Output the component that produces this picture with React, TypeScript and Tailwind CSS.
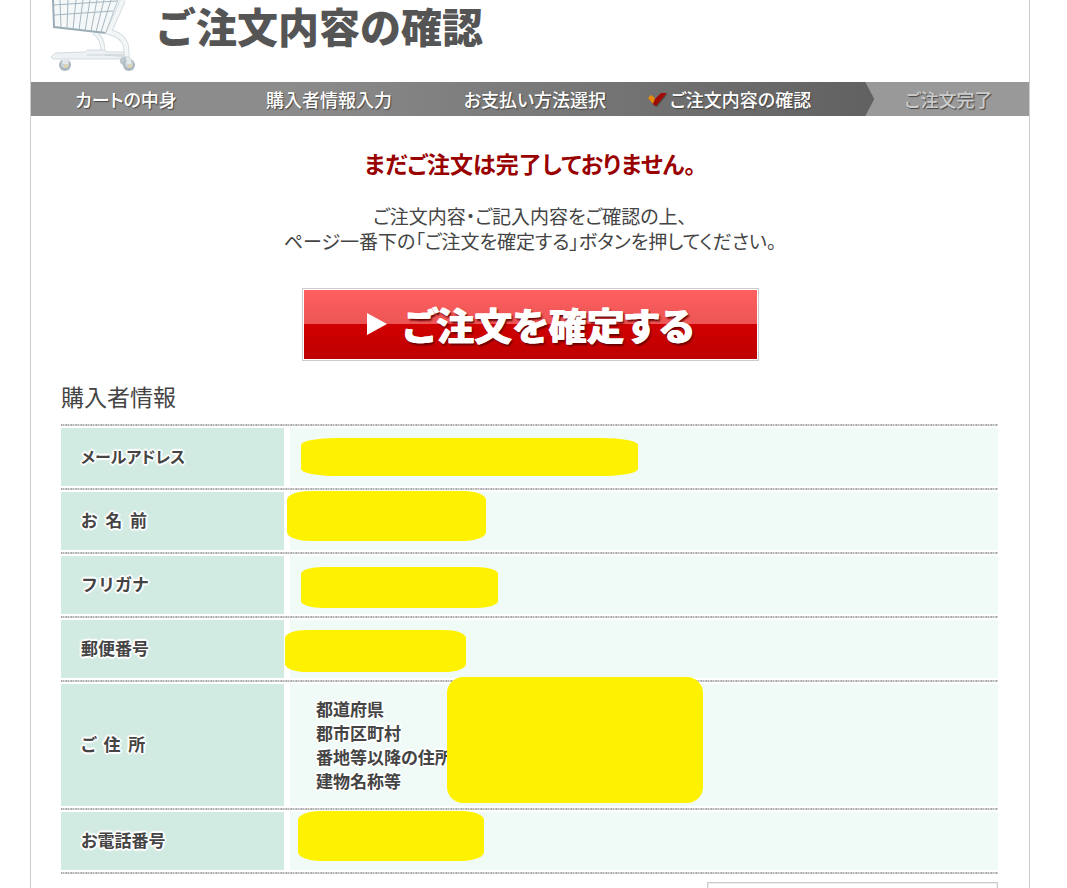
import type { ReactNode } from 'react';

const halo =
  '[text-shadow:1px_1px_1px_#fff,-1px_-1px_1px_#fff,1px_-1px_1px_#fff,-1px_1px_1px_#fff,2px_0_1px_#fff,-2px_0_1px_#fff,0_2px_1px_#fff,0_-2px_1px_#fff,0_0_3px_#fff]';

const dots =
  'bg-[repeating-linear-gradient(90deg,#a8a8a8_0_1px,#d4d4d4_1px_2px,#b8b8b8_2px_3px,#dcdcdc_3px_4px,#c4c4c4_4px_5px)] bg-[length:100%_2px] bg-no-repeat';

function Cart() {
  return (
    <svg viewBox="0 0 88 76" className="h-[76px] w-[88px] shrink-0" fill="none" aria-hidden="true">
      <path d="M43 32 Q52 38 52 51" stroke="#d3dbdf" strokeWidth="5" />
      <path d="M43 32 Q52 38 52 51" stroke="#f3f6f7" strokeWidth="3" />
      <path d="M2 0 L3 27 L54 33 L68 0 Z" fill="#f5f8f9" />
      <g stroke="#a7b6bf" strokeWidth="1">
        <path d="M2 5 L66 1 M3 15 L62 11" />
        <path d="M9 0 L10 28 M17 0 L16 28 M25 0 L22 29 M32 0 L28 30 M39 0 L34 31 M46 0 L40 31 M53 0 L45 32 M60 0 L50 32" />
      </g>
      <path d="M2 0 L3 27 L55 33" stroke="#9badb7" strokeWidth="2" />
      <path d="M72 0 L58 32 Q72 35 75 46 L76 60" stroke="#d6dee2" strokeWidth="6" />
      <path d="M72 0 L58 32 Q72 35 75 46 L76 60" stroke="#f3f6f7" strokeWidth="4" />
      <path d="M67 0 L55 32" stroke="#b4c1c8" strokeWidth="1" />
      <path d="M4 53 L34 52 L36 50 H53 L56 52 H73 V55 H54 L78 57 V59 H2 L0 57 Z" fill="#edf1f3" stroke="#d3dbdf" strokeWidth="1" />
      <path d="M36 55 H73" stroke="#cdd6da" strokeWidth="1" />
      <circle cx="73" cy="61" r="4" fill="#bcc7cd" />
      <circle cx="14" cy="65" r="6" fill="#aab7be" />
      <circle cx="14" cy="64" r="4" fill="#ccd4d8" />
      <circle cx="15" cy="66" r="2" fill="#ddd3ae" />
      <circle cx="78" cy="65" r="6" fill="#aab7be" />
      <circle cx="78" cy="64" r="4" fill="#ccd4d8" />
      <circle cx="79" cy="66" r="2" fill="#ddd3ae" />
      <path d="M11 59 H18 L17 64 H12 Z M75 58 H80 V64 H76 Z" fill="#e3e9eb" />
    </svg>
  );
}

function Check() {
  return (
    <svg viewBox="0 0 20 16" className="mr-[3px] h-4 w-5" aria-hidden="true">
      <path d="M2 8 L5 5 L9 9 L15 3 L20 4 L10 16 L7 15 Z" fill="#333" opacity=".5" />
      <path d="M1 7 L4 4 L7 6 L8 9 L6 13 Z" fill="#e58a0c" />
      <path d="M6 13 L8 8 L14 2 L20 2 L9 15 Z" fill="#a00c05" />
    </svg>
  );
}

interface RowProps {
  label: string;
  labelClass?: string;
  tall?: boolean;
  children?: ReactNode;
}

function Row({ label, labelClass = 'text-[17px]', tall, children }: RowProps) {
  return (
    <tr className={dots}>
      <th scope="row" className="w-[229px] pt-[4px] pb-[2px] pr-[6px] text-left align-top">
        <div
          className={`flex items-center bg-[#d2ebe2] pb-[2px] pl-5 leading-6 ${labelClass} ${halo} ${tall ? 'h-[122px]' : 'h-[58px]'}`}
        >
          {label}
        </div>
      </th>
      <td className="pt-[4px] pb-[2px] align-top">
        <div className={`relative bg-[#f0faf7] ${tall ? 'h-[122px]' : 'h-[58px]'}`}>{children}</div>
      </td>
    </tr>
  );
}

function Mask({ place }: { place: string }) {
  return <div className={`absolute bg-[#fff200] ${place}`} />;
}

export default function App() {
  return (
    <div className="h-screen min-h-[600px] overflow-hidden bg-white pr-[37px] pl-[30px] font-['Noto_Sans_CJK_JP',sans-serif] text-[#444] [font-feature-settings:'palt']">
      <div className="min-h-full border-x border-[#ccc]">
        <header className="flex h-[82px] items-start pl-5">
          <Cart />
          <h1 className="ml-4 text-[41px] leading-[50px] font-black whitespace-nowrap text-[#555] [font-feature-settings:normal]">
            ご注文内容の確認
          </h1>
        </header>

        <nav aria-label="ご注文の流れ" className="bg-[#999]">
          <ol className="flex h-[34px] items-center text-[18px] leading-6 font-medium whitespace-nowrap text-white [text-shadow:1px_1px_1px_#444]">
            <li className="flex h-full w-[84.5%] items-center bg-linear-to-r from-[#8c8c8c] from-30% to-[#616161] [clip-path:polygon(0_0,calc(100%-9px)_0,100%_50%,calc(100%-9px)_100%,0_100%)]">
              <ol className="flex w-full items-center">
                <li className="w-[190px] text-center">カートの中身</li>
                <li className="w-[216px] text-center">購入者情報入力</li>
                <li className="w-[196px] text-center">お支払い方法選択</li>
                <li aria-current="step" className="flex items-center pl-[14px]">
                  <Check />
                  ご注文内容の確認
                </li>
              </ol>
            </li>
            <li className="flex-1 pr-[6px] text-center text-[#ccc]">ご注文完了</li>
          </ol>
        </nav>

        <section className="flex flex-col items-center pt-[31px] text-center">
          <p className="text-[23px] leading-8 font-bold text-[#990000]">まだご注文は完了しておりません。</p>
          <p className="mt-6 text-[19px] leading-[25px]">
            ご注文内容・ご記入内容をご確認の上、
            <br />
            ページ一番下の「ご注文を確定する」ボタンを押してください。
          </p>
          <button
            type="button"
            className="mt-[35px] flex h-[73px] w-[457px] items-center justify-center gap-4 border border-[#ccc] bg-[linear-gradient(#ff5f5f,#ec5555_50%,#d00000_50%,#be0000)] pb-[2px] text-[38px] leading-[44px] font-black text-white shadow-[inset_0_0_0_1px_#fff] [text-shadow:1px_0_0_#fff,2px_2px_2px_#600]"
          >
            <svg viewBox="0 0 20 22" className="h-[22px] w-5" fill="#fff" aria-hidden="true">
              <path d="M0 0 L20 11 L0 22 Z" />
            </svg>
            ご注文を確定する
          </button>
        </section>

        <section className="pt-[17px] pr-[31px] pl-[30px]">
          <h2 className="text-[23px] leading-9">購入者情報</h2>
          <table className="mt-[10px] w-full border-collapse">
            <tbody>
              <Row label="メールアドレス" labelClass="text-[16px]">
                <Mask place="top-[10px] left-[11px] h-[38px] w-[337px] rounded-[36px/7px]" />
              </Row>
              <Row label={'お\u00a0\u00a0名\u00a0\u00a0前'}>
                <Mask place="-top-[1px] -left-[3px] h-[50px] w-[199px] rounded-[22px/9px]" />
              </Row>
              <Row label="フリガナ" labelClass="text-[17px] [font-feature-settings:normal]">
                <Mask place="top-[11px] left-[11px] h-[41px] w-[197px] rounded-[22px/7px]" />
              </Row>
              <Row label="郵便番号">
                <Mask place="top-[10px] -left-[5px] h-[42px] w-[181px] rounded-[22px/8px]" />
              </Row>
              <Row label={'ご\u00a0\u00a0住\u00a0\u00a0所'} tall>
                <div className={`flex h-full flex-col justify-center pl-[26px] text-[17px] leading-6 font-bold ${halo}`}>
                  <p>都道府県</p>
                  <p>郡市区町村</p>
                  <p>番地等以降の住所</p>
                  <p>建物名称等</p>
                </div>
                <Mask place="-top-[7px] left-[157px] h-[126px] w-[256px] rounded-2xl" />
              </Row>
              <Row label="お電話番号">
                <Mask place="-top-[1px] left-[8px] h-[50px] w-[186px] rounded-[22px/9px]" />
              </Row>
            </tbody>
          </table>
          <div className={`h-[2px] ${dots}`} />
          <div className="mt-2 ml-auto h-10 w-[291px] border border-[#ccc] shadow-[inset_0_0_0_1px_#eee]" />
        </section>
      </div>
    </div>
  );
}
